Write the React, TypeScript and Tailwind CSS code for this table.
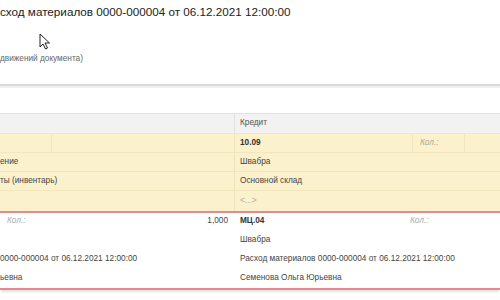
import React from "react";

const font = { fontFamily: '"Liberation Sans", Arial, sans-serif' };

function Cursor() {
  return (
    <svg width="12" height="17" viewBox="0 0 12 17" className="absolute left-[39px] top-[33px]">
      <path
        d="M1 1 L1 14 L4 11 L6.5 16 L8.5 15 L6 10 L10.5 10 Z"
        fill="#fff"
        stroke="#222"
        strokeWidth="1"
        strokeLinejoin="round"
      />
    </svg>
  );
}

export default function App() {
  return (
    <div className="relative h-[300px] w-[500px] overflow-hidden bg-white text-[8.25px] text-[#444]" style={font}>
      <div className="h-[84px] pt-[4px]">
        <div className="whitespace-nowrap text-[11.7px] leading-[16px] text-[#222]">
          сход материалов 0000-000004 от 06.12.2021 12:00:00
        </div>
        <div className="mt-[34px] whitespace-nowrap leading-[10px] text-[#666]">
          движений документа)
        </div>
      </div>
      <Cursor />

      <div className="h-[2px] bg-[#d9d9d9]" />
      <div className="h-[2px] bg-[#f0f0f0]" />
      <div className="h-[25px]" />

      {/* header */}
      <div className="flex h-[21px] border-t border-[#e2e2e2] bg-[#f2f2f2] border-b border-b-[#e6e6e6]">
        <div className="w-[235px] shrink-0 border-r border-[#e0e0e0]" />
        <div className="flex items-center pl-[5px] text-[#555]">Кредит</div>
      </div>

      {/* yellow block */}
      <div className="bg-[#fcf1cd]">
        <div className="flex h-[19px] border-b border-[#f3e6bd]">
          <div className="w-[52px] shrink-0 border-r border-[#f3e6bd]" />
          <div className="w-[183px] shrink-0 border-r border-[#efe2b8]" />
          <div className="flex w-[178px] shrink-0 items-center border-r border-[#f3e6bd] pl-[5px] font-bold text-[#333]">10.09</div>
          <div className="flex w-[52px] shrink-0 items-center border-r border-[#f3e6bd] pl-[7px] italic text-[#b0a690]">Кол.:</div>
        </div>
        <div className="flex h-[19px] border-b border-[#f3e6bd]">
          <div className="flex w-[235px] shrink-0 items-center border-r border-[#efe2b8]">ение</div>
          <div className="flex items-center pl-[5px]">Швабра</div>
        </div>
        <div className="flex h-[19px] border-b border-[#f3e6bd]">
          <div className="flex w-[235px] shrink-0 items-center border-r border-[#efe2b8]">ты (инвентарь)</div>
          <div className="flex items-center pl-[5px]">Основной склад</div>
        </div>
        <div className="flex h-[20px]">
          <div className="w-[235px] shrink-0 border-r border-[#efe2b8]" />
          <div className="flex items-center pl-[5px] text-[#aaa]">&lt;...&gt;</div>
        </div>
      </div>

      {/* selected row */}
      <div className="border-y-[2px] border-[#e8888a] shadow-[0_3px_2px_-1px_rgba(0,0,0,0.12)]">
        <div className="flex h-[17px]">
          <div className="flex w-[235px] shrink-0 items-center">
            <span className="pl-[7px] italic text-[#aaa]">Кол.:</span>
            <span className="ml-auto pr-[7px]">1,000</span>
          </div>
          <div className="flex w-[175px] shrink-0 items-center pl-[5px] font-bold text-[#333]">МЦ.04</div>
          <div className="flex items-center italic text-[#aaa]">Кол.:</div>
        </div>
        <div className="flex h-[20px]">
          <div className="w-[235px] shrink-0" />
          <div className="flex items-center pl-[5px]">Швабра</div>
        </div>
        <div className="flex h-[19px]">
          <div className="flex w-[235px] shrink-0 items-center whitespace-nowrap">0000-000004 от 06.12.2021 12:00:00</div>
          <div className="flex items-center whitespace-nowrap pl-[5px]">Расход материалов 0000-000004 от 06.12.2021 12:00:00</div>
        </div>
        <div className="flex h-[19px]">
          <div className="flex w-[235px] shrink-0 items-center">ьевна</div>
          <div className="flex items-center pl-[5px]">Семенова Ольга Юрьевна</div>
        </div>
      </div>
    </div>
  );
}
